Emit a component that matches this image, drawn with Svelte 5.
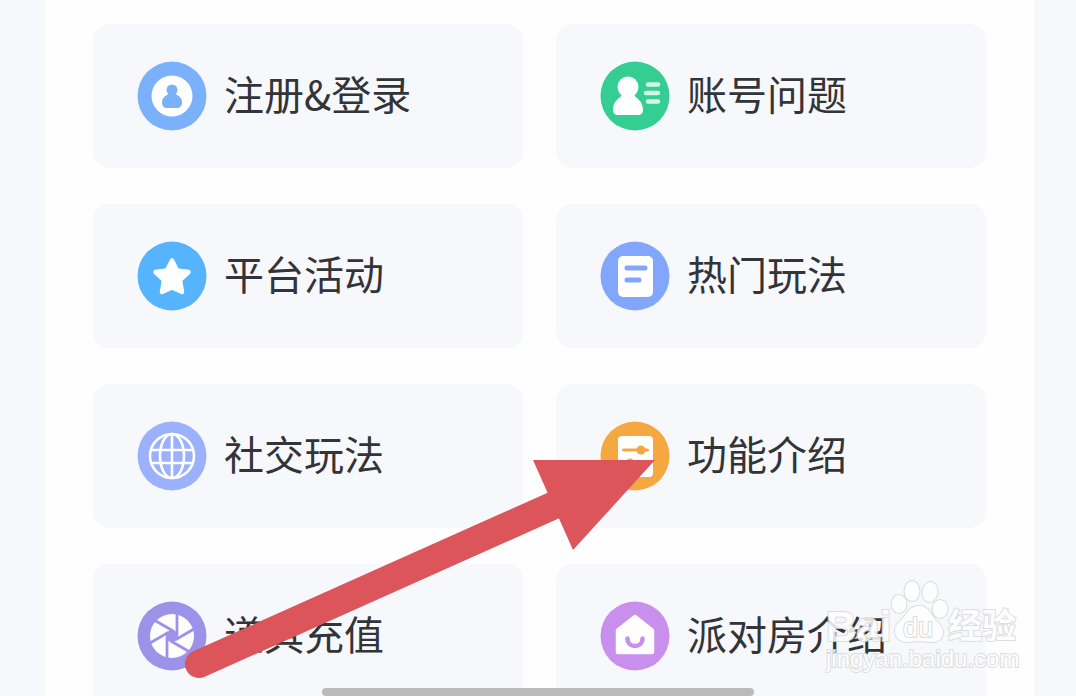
<script>
	const topics = [
		{ icon: 'login', color: '#7ab1fa', label: '注册&登录' },
		{ icon: 'account', color: '#35ce92', label: '账号问题' },
		{ icon: 'star', color: '#55b4fd', label: '平台活动' },
		{ icon: 'note', color: '#82a6fb', label: '热门玩法' },
		{ icon: 'globe', color: '#9cb1fb', label: '社交玩法' },
		{ icon: 'settings', color: '#f4a83f', label: '功能介绍' },
		{ icon: 'shutter', color: '#9c92e8', label: '道具充值' },
		{ icon: 'house', color: '#c98fec', label: '派对房介绍' }
	];
	const blades = [0, 60, 120, 180, 240, 300];
</script>

<div class="page">
	<main class="panel">
		<nav class="topics">
			{#each topics as topic}
				<a class="card" href="#{topic.icon}">
					<svg class="icon" viewBox="0 0 70 70" aria-hidden="true">
						<circle cx="35" cy="35" r="34.5" fill={topic.color} />
						{#if topic.icon === 'login'}
							<circle cx="35" cy="35" r="20.5" fill="#fff" />
							<circle cx="35" cy="29" r="5.500" fill={topic.color} />
							<path d="M31 30h8c0 2-1 3 1 4 3 1.500 5 4 5 7 0 4-2 6-5 6H30c-3 0-5-2-5-6 0-3 2-5.500 5-7 2-1 1-2 1-4z" fill={topic.color} />
						{:else if topic.icon === 'account'}
							<circle cx="28" cy="26" r="10.500" fill="#fff" />
							<path d="M22 33h12c0 4 9 5 9 16 0 3-2 5-5 5H18c-3 0-5-2-5-5 0-11 9-12 9-16z" fill="#fff" />
							<path d="M48 23.500h10M46 32h12M48 40.500h10" stroke="#d2f8e6" stroke-width="4.500" stroke-linecap="round" />
						{:else if topic.icon === 'star'}
							<path d="M35 19.500l5 10 11.500 1.500-8.500 8 2 12L35 46.500 25 51l2-12-8.500-8L30 29.500z" fill="#fff" stroke="#fff" stroke-width="4.500" stroke-linejoin="round" />
						{:else if topic.icon === 'note'}
							<rect x="18" y="15" width="35" height="41" rx="5" fill="#fff" />
							<path d="M27 27h18M27 39h12" stroke={topic.color} stroke-width="5" stroke-linecap="round" />
						{:else if topic.icon === 'globe'}
							<g fill="none" stroke="#fff" stroke-width="2.600">
								<circle cx="35" cy="35" r="22" />
								<ellipse cx="35" cy="35" rx="12" ry="22" />
								<path d="M35 13v44M14 29h42M14 42h42" />
							</g>
						{:else if topic.icon === 'settings'}
							<rect x="18" y="15" width="35" height="41" rx="4" fill="#fff" />
							<path d="M23.500 29h24M23.500 42h24" stroke={topic.color} stroke-width="3" stroke-linecap="round" />
							<circle cx="41" cy="29" r="4.500" fill={topic.color} />
							<circle cx="30" cy="42" r="4.500" fill={topic.color} />
						{:else if topic.icon === 'shutter'}
							<circle cx="35" cy="35" r="22" fill="#fff" />
							<circle cx="35" cy="35" r="6" fill={topic.color} />
							{#each blades as angle}
								<path d="M40 34V11" stroke={topic.color} stroke-width="2.800" transform="rotate({angle} 35 35)" />
							{/each}
						{:else}
							<path d="M35 16l17 13.500V51H18V29.500z" fill="#fff" stroke="#fff" stroke-width="4.500" stroke-linejoin="round" />
							<path d="M27.500 37.500c0 10 15 10 15 0" fill="none" stroke={topic.color} stroke-width="4.500" stroke-linecap="round" />
						{/if}
					</svg>
					<span class="label">{topic.label}</span>
				</a>
			{/each}
		</nav>
	</main>

	<div class="home-bar"></div>

	<svg class="arrow" viewBox="0 0 480 230" aria-hidden="true">
		<path d="M24 214L384 53" stroke="#db555a" stroke-width="28" stroke-linecap="round" />
		<path d="M358 10h122L398 100z" fill="#db555a" />
	</svg>

	<svg class="watermark" viewBox="0 0 200 100" role="img" aria-label="Baidu经验">
		<g class="mark">
			<text class="bold" x="1" y="65" font-size="42">Bai</text>
			<text class="bold" x="123" y="62" font-size="34">经验</text>
			<ellipse cx="74" cy="28" rx="7.500" ry="9" />
			<ellipse cx="87" cy="15" rx="7.500" ry="10" />
			<ellipse cx="105" cy="16" rx="7.500" ry="10" transform="rotate(10 105 16)" />
			<ellipse cx="115" cy="33" rx="7.500" ry="9" />
			<path d="M94 30c8 0 11 6 15 12 4 5 9 8 9 15 0 6-5 9-11 9-5 0-8-1-13-1s-8 1-12 1c-7 0-12-4-12-11s5-9 9-14c4-6 7-11 15-11z" />
			<text x="78" y="61" font-size="27">du</text>
			<text x="1" y="91" font-size="24">jingyan.baidu.com</text>
		</g>
	</svg>
</div>

<style>
	:global(body) {
		margin: 0;
		background: #f6f8fc;
	}
	.page {
		position: relative;
		height: 100vh;
		overflow: hidden;
		font-family: "Noto Sans CJK SC", "Noto Sans", sans-serif;
	}
	.panel {
		box-sizing: border-box;
		min-height: 100%;
		margin: 0 42px 0 45px;
		padding: 24px 48px;
		background: #fefefe;
	}
	.topics {
		display: grid;
		grid-template-columns: 1fr 1fr;
		gap: 36px 33px;
	}
	.card {
		display: flex;
		align-items: center;
		gap: 17px;
		box-sizing: border-box;
		height: 144px;
		padding: 0 44px;
		border-radius: 16px;
		background: #f7f8fb;
		color: #333437;
		font-size: 40px;
		line-height: 56px;
		text-decoration: none;
		white-space: nowrap;
	}
	.icon {
		flex: none;
		width: 70px;
		height: 70px;
	}
	.label {
		padding-bottom: 6px;
	}
	.home-bar {
		position: absolute;
		bottom: 0;
		left: 50%;
		width: 432px;
		height: 8px;
		border-radius: 4px;
		background: #bababa;
		transform: translateX(-50%);
	}
	.arrow {
		position: absolute;
		top: 450px;
		left: 175px;
		width: 480px;
		height: 230px;
	}
	.watermark {
		position: absolute;
		top: 576px;
		left: 825px;
		width: 200px;
		height: 100px;
		opacity: 0.85;
		font-family: "Liberation Sans", "Noto Sans CJK SC", sans-serif;
	}
	.mark {
		fill: #fff;
		stroke: #d6d8da;
		stroke-width: 2px;
		paint-order: stroke;
	}
	.bold {
		font-weight: bold;
	}
</style>
